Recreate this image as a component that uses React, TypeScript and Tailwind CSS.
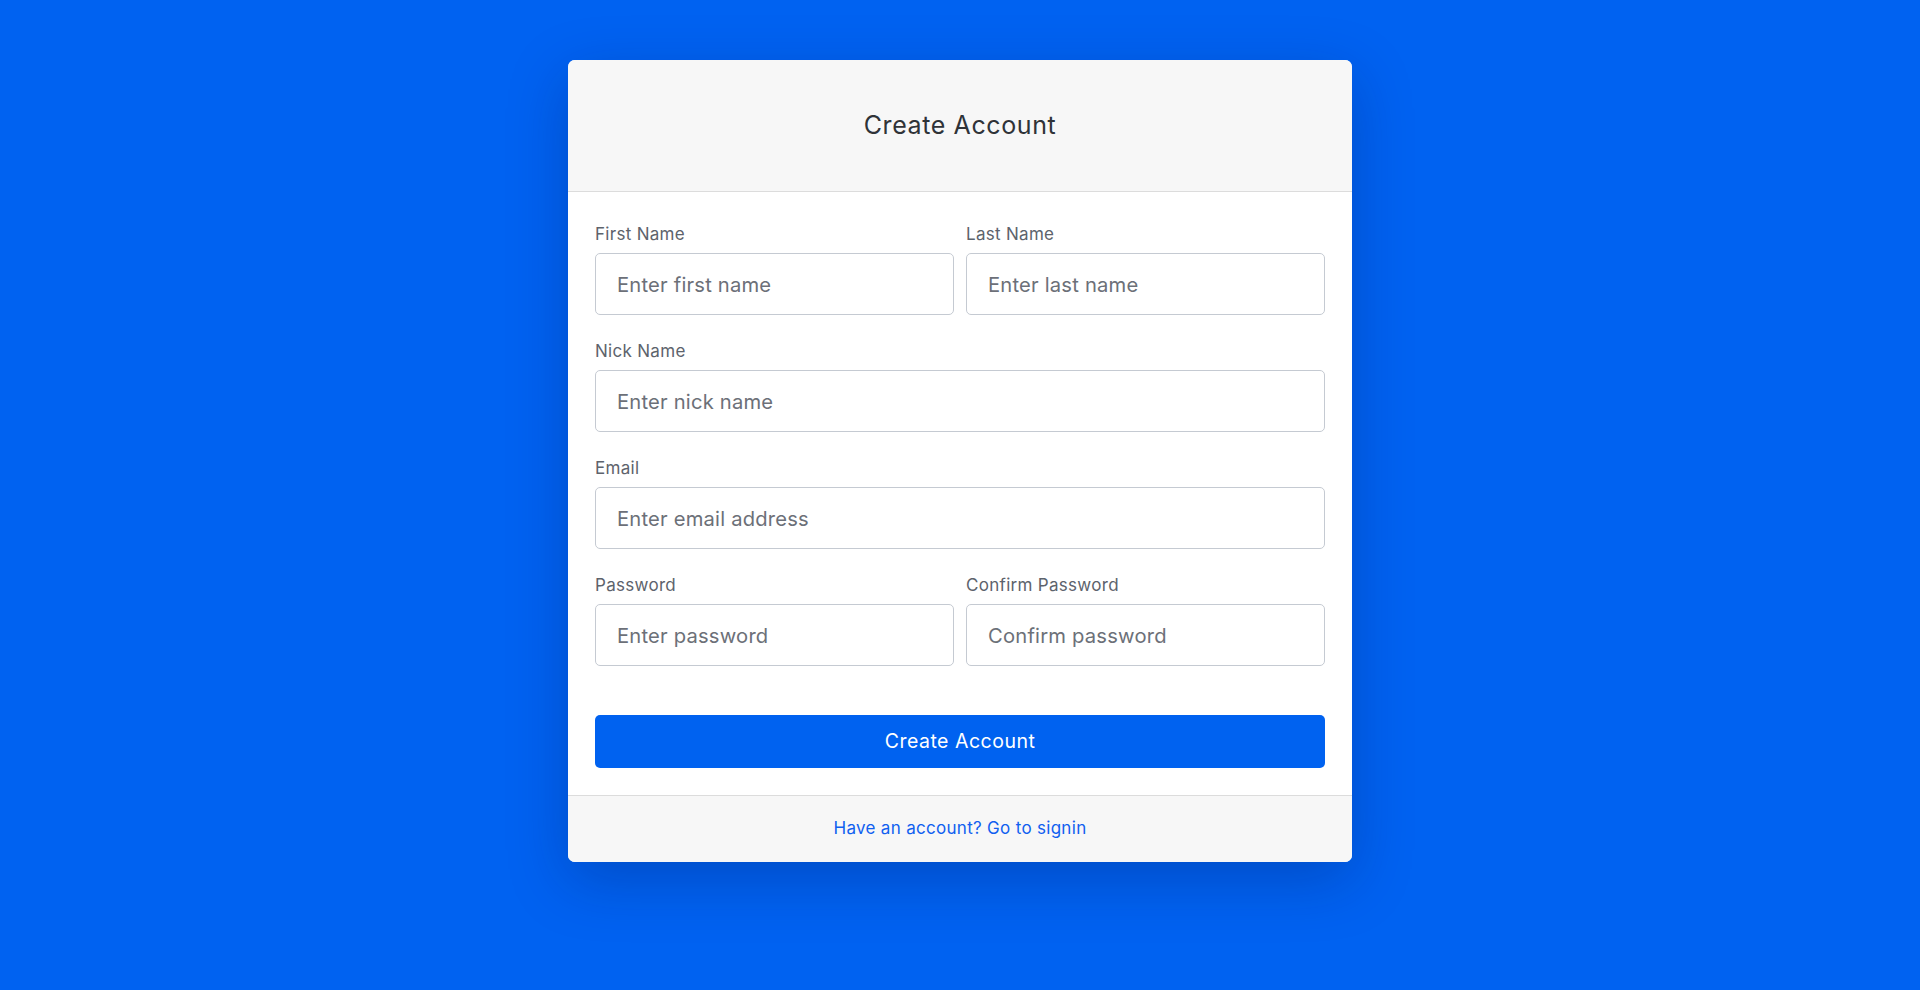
import React from "react";

const font = { fontFamily: "Inter, 'Noto Sans', sans-serif" };

function Field({ label, placeholder, type = "text" }: { label: string; placeholder: string; type?: string }) {
  return (
    <div className="flex flex-col min-w-0">
      <label className="h-[20px] leading-[22px] text-[17px] text-[#5d636c] mb-[10px] tracking-[0.3px]">{label}</label>
      <input
        type={type}
        placeholder={placeholder}
        className="h-[62px] w-full rounded-[5px] border border-[#c5cad2] bg-white px-[21px] text-[20.2px] text-[#333] tracking-[0.2px] outline-none placeholder:text-[#6c7078]"
      />
    </div>
  );
}

export default function App() {
  return (
    <div className="h-[990px] w-full bg-[#0062f1] flex justify-center pt-[60px] overflow-hidden" style={font}>
      <div className="w-[784px] h-[802px] rounded-[7px] overflow-hidden bg-white shadow-[0_18px_60px_rgba(0,20,90,0.28)] flex flex-col">
        <div className="h-[132px] shrink-0 bg-[#f7f7f7] border-b border-[#dcdcdc] flex items-center justify-center">
          <h1 className="text-[25px] font-normal text-[#2f3338] tracking-[0.6px]">Create Account</h1>
        </div>
        <div className="px-[27px] pt-[31px] pb-[27px] flex flex-col gap-[25px]">
          <div className="grid grid-cols-2 gap-[12px]">
            <Field label="First Name" placeholder="Enter first name" />
            <Field label="Last Name" placeholder="Enter last name" />
          </div>
          <Field label="Nick Name" placeholder="Enter nick name" />
          <Field label="Email" placeholder="Enter email address" type="email" />
          <div className="grid grid-cols-2 gap-[12px]">
            <Field label="Password" placeholder="Enter password" type="password" />
            <Field label="Confirm Password" placeholder="Confirm password" type="password" />
          </div>
          <button className="mt-[24px] h-[53px] w-full rounded-[5px] bg-[#0062f0] text-white text-[19.5px] tracking-[0.5px]">
            Create Account
          </button>
        </div>
        <div className="flex-1 border-t border-[#dcdcdc] bg-[#f7f7f7] flex items-center justify-center">
          <a href="#" className="text-[17px] text-[#1060f0] tracking-[0.3px]">Have an account? Go to signin</a>
        </div>
      </div>
    </div>
  );
}
